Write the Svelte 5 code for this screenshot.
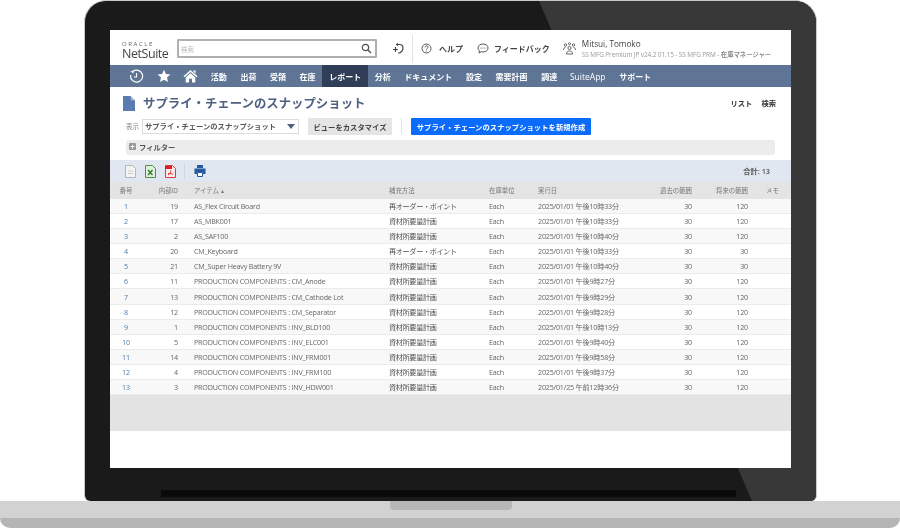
<script>
  const navA = ['活動','出荷','受領','在庫'];
  const navB = ['分析','ドキュメント','設定','需要計画','調達','SuiteApp','サポート'];
  const PC = 'PRODUCTION COMPONENTS : ';
  const RE = '再オーダー・ポイント';
  const MR = '資材所要量計画';
  const rows = [
    [19,'AS_Flex Circuit Board',RE,'2025/01/01 午後10時33分',120],
    [17,'AS_MBK001',MR,'2025/01/01 午後10時33分',120],
    [2,'AS_SAF100',MR,'2025/01/01 午後10時40分',120],
    [20,'CM_Keyboard',RE,'2025/01/01 午後10時33分',30],
    [21,'CM_Super Heavy Battery 9V',MR,'2025/01/01 午後10時40分',30],
    [11,PC+'CM_Anode',MR,'2025/01/01 午後9時27分',120],
    [13,PC+'CM_Cathode Lot',MR,'2025/01/01 午後9時29分',120],
    [12,PC+'CM_Separator',MR,'2025/01/01 午後9時28分',120],
    [1,PC+'INV_BLD100',MR,'2025/01/01 午後10時13分',120],
    [5,PC+'INV_ELC001',MR,'2025/01/01 午後9時40分',120],
    [14,PC+'INV_FRM001',MR,'2025/01/01 午後9時58分',120],
    [4,PC+'INV_FRM100',MR,'2025/01/01 午後9時37分',120],
    [3,PC+'INV_HDW001',MR,'2025/01/25 午前12時36分',120]
  ];
  const title = 'サプライ・チェーンのスナップショット';
</script>

<div class="page">
  <div class="lid">
    <div class="screen">
      <header class="top">
        <div class="logo"><span class="oracle">ORACLE</span><span class="ns">NetSuite</span></div>
        <div class="search">
          <span>検索</span>
          <svg width="11" height="11" viewBox="0 0 11 11"><circle cx="4.500" cy="4.500" r="3.200" fill="none" stroke="#555" stroke-width="1.200"/><path d="M7 7l3 3" stroke="#555" stroke-width="1.500"/></svg>
        </div>
        <svg class="back" width="12" height="13" viewBox="0 0 12 13"><path d="M4 2.500h3.500c2 0 3.500 1.500 3.500 3.500S9.500 10 7.500 11H6" fill="none" stroke="#444" stroke-width="1.200"/><path d="M1 7.500h5M3.500 5v5" stroke="#444" stroke-width="1.200"/><path d="M6 .8v3.400L3.800 2.500z" fill="#444"/></svg>
        <i class="vline"></i>
        <div class="tool help">
          <svg width="11" height="11" viewBox="0 0 11 11"><circle cx="5.500" cy="5.500" r="4.500" fill="none" stroke="#555"/><path d="M4 4.300c0-2 3-2 3 0 0 1-1.500 1-1.500 2.200" fill="none" stroke="#555"/><circle cx="5.500" cy="8" r=".6" fill="#555"/></svg>
          <b>ヘルプ</b>
        </div>
        <div class="tool feedback">
          <svg width="12" height="11" viewBox="0 0 12 11"><path d="M6 1c3 0 5 1.700 5 4s-2 4-5 4c-.7 0-1.300-.1-1.900-.3L2 10l.4-2.300C1.500 7 1 6 1 5c0-2.300 2-4 5-4z" fill="none" stroke="#555"/><circle cx="4" cy="5" r=".6" fill="#555"/><circle cx="6" cy="5" r=".6" fill="#555"/><circle cx="8" cy="5" r=".6" fill="#555"/></svg>
          <b>フィードバック</b>
        </div>
        <svg class="people" width="13" height="13" viewBox="0 0 13 13"><g fill="none" stroke="#666" stroke-width="1"><circle cx="6.500" cy="6" r="1.600"/><path d="M3.500 12c0-2 1-3 3-3s3 1 3 3z"/><circle cx="2.500" cy="3" r="1.200"/><circle cx="10.500" cy="3" r="1.200"/><circle cx="6.500" cy="1.700" r="1"/><path d="M.5 8c0-1.500.6-2.500 2-2.500M12.500 8c0-1.500-.6-2.500-2-2.500"/></g></svg>
        <div class="user">
          <span class="name">Mitsui, Tomoko</span>
          <span class="role">SS MFG Premium JP v24.2 01.15 - SS MFG PRM - <em>在庫マネージャー</em></span>
        </div>
      </header>

      <nav class="nav">
        <svg class="ni-clock" width="15" height="15" viewBox="0 0 15 15"><path d="M4 2.300A6 6 0 1 1 1.700 6" fill="none" stroke="#fff" stroke-width="1.200"/><path d="M7.500 4v4H5" fill="none" stroke="#fff" stroke-width="1.100"/><path d="M1.500 2.500l3-1v3z" fill="#fff"/></svg>
        <svg class="ni-star" width="14" height="14" viewBox="0 0 14 14"><path d="M7 .8l1.900 4.200 4.500.5-3.400 3 1 4.500L7 10.700 3 13l1-4.500-3.400-3 4.500-.5z" fill="#fff"/></svg>
        <svg class="ni-home" width="15" height="14" viewBox="0 0 15 14"><path d="M7.500 1L.5 7.300l1 1L7.500 3l6 5.300 1-1zM10.500 1.500h2v3l-2-1.800z" fill="#fff"/><path d="M2.700 8.500L7.500 4.200l4.800 4.300V13.500H9V9.800H6v3.700H2.700z" fill="#fff"/></svg>
        {#each navA as n}<a>{n}</a>{/each}
        <a class="on">レポート</a>
        {#each navB as n}<a class:latin={n === 'SuiteApp'}>{n}</a>{/each}
      </nav>

      <div class="titlebar">
        <svg width="12" height="15" viewBox="0 0 12 15"><path d="M0 0h7.500L12 4.500V15H0z" fill="#5b7cb0"/><path d="M7.800 0L12 4.200H7.800z" fill="#a9bbd6"/></svg>
        <h1>{title}</h1>
        <div class="links"><b>リスト</b><b>検索</b></div>
      </div>

      <div class="controls">
        <span class="lbl">表示</span>
        <div class="select"><span>{title}</span><i class="caret"></i></div>
        <button class="grey">ビューをカスタマイズ</button>
        <i class="vline2"></i>
        <button class="blue">{title}を新規作成</button>
      </div>

      <div class="filter"><i class="plus">+</i><span>フィルター</span></div>

      <div class="toolbar">
        <svg class="t1" width="11" height="13" viewBox="0 0 11 13"><path d="M.5.500h7l3 3v9H.500z" fill="#f4f4f4" stroke="#b5b5b5"/><path d="M3 6h5M3 8.500h5" stroke="#ccc"/></svg>
        <svg class="t2" width="11" height="13" viewBox="0 0 11 13"><path d="M.5.500h7l3 3v9H.500z" fill="#dfeedd" stroke="#4b9142"/><path d="M3 5l4.500 5M7.500 5L3 10" stroke="#2d7a26" stroke-width="1.300"/></svg>
        <svg class="t3" width="11" height="13" viewBox="0 0 11 13"><path d="M.5.500h7l3 3v9H.500z" fill="#fbe9e9" stroke="#d83a3a"/><path d="M0 1h7v3H0z" fill="#d92020"/><path d="M3 10c2-1 3-3 2.500-4.500M3 8.500c2 0 4 0 5 .8" fill="none" stroke="#d83a3a"/></svg>
        <i class="vline3"></i>
        <svg class="t4" width="12" height="12" viewBox="0 0 12 12"><path d="M3 0h6v3H3z" fill="#245a9e"/><path d="M.5 3.500h11V9H9V7H3v2H.5z" fill="#245a9e"/><path d="M3.500 7.500h5v4h-5z" fill="#fff" stroke="#245a9e"/></svg>
        <span class="total">合計: 13</span>
      </div>

      <table>
        <colgroup><col class="c1"/><col class="c2"/><col class="c3"/><col class="c4"/><col class="c5"/><col class="c6"/><col class="c7"/><col class="c8"/><col class="c9"/></colgroup>
        <thead>
          <tr><th class="ctr">番号</th><th class="r">内部ID</th><th class="item">アイテム ▴</th><th>補充方法</th><th>在庫単位</th><th>実行日</th><th class="r">過去の範囲</th><th class="r">将来の範囲</th><th class="memo">メモ</th></tr>
        </thead>
        <tbody>
          {#each rows as row, i}
            <tr class:odd={i % 2 === 0}>
              <td class="ctr link">{i + 1}</td>
              <td class="r">{row[0]}</td>
              <td class="item">{row[1]}</td>
              <td class="jp">{row[2]}</td>
              <td>Each</td>
              <td>{row[3]}</td>
              <td class="r">30</td>
              <td class="r">{row[4]}</td>
              <td></td>
            </tr>
          {/each}
        </tbody>
      </table>
      <div class="empty"></div>
    </div>
    <div class="strip"></div>
  </div>
  <div class="base">
    <div class="deck"><div class="notch"></div></div>
    <div class="lip"></div>
  </div>
</div>

<style>
  :global(body) { margin: 0; background: #fff; }
  .page { width: 900px; height: 529px; overflow: hidden; display: flex; flex-direction: column; font-family: "Open Sans", "Noto Sans CJK JP", sans-serif; color: #555; }
  .lid { position: relative; box-sizing: border-box; width: 733px; height: 501px; margin-left: 84px; padding: 29px 25px 0; background: #1a1a1a; border: 1px solid #c9c9c9; border-bottom: 0; border-radius: 22px 22px 6px 6px; overflow: hidden; flex: none; }
  .lid::before { content: ""; position: absolute; inset: 0; background: #383838; clip-path: polygon(454px 0, 100% 0, 100% 100%, 667px 100%); }
  .screen { position: relative; box-sizing: border-box; width: 681px; height: 438px; background: #fff; filter: blur(0.5px); overflow: hidden; }
  .strip { position: relative; height: 7px; margin: 22px 55px 0 51px; background: #0a0a0a; }

  .top { height: 35px; padding-top: 2px; display: flex; align-items: center; box-sizing: border-box; }
  .logo { width: 67px; padding-left: 12px; box-sizing: border-box; display: flex; flex-direction: column; line-height: 1; margin-top: 4px; }
  .oracle { font-size: 6px; font-weight: 400; letter-spacing: 1.600px; color: #666; height: 6.500px; line-height: 6px; }
  .ns { font-size: 12.500px; line-height: 13px; color: #444; letter-spacing: -.45px; }
  .search { width: 200px; height: 19px; box-sizing: border-box; border: 2px solid #b0b0b0; border-radius: 1px; display: flex; align-items: center; justify-content: space-between; padding: 0 3px 0 2px; font-size: 6.500px; color: #bbb; }
  .back { margin-left: 15px; }
  .vline { width: 1px; height: 28px; background: #e2e2e2; margin-left: 8px; }
  .tool { display: flex; align-items: center; gap: 7px; }
  .tool b { font-size: 8px; color: #444; font-weight: 700; }
  .help { margin-left: 8px; }
  .feedback { margin-left: 14px; gap: 5px; }
  .people { margin-left: 13px; }
  .user { margin-left: 6px; display: flex; flex-direction: column; white-space: nowrap; line-height: 1; gap: 4px; margin-top: 2px; }
  .name { font-size: 8.200px; color: #444; }
  .role { font-size: 6.450px; color: #999; letter-spacing: -.1px; }
  .role em { font-style: normal; color: #555; }

  .nav { height: 22px; background: #5f7596; display: flex; align-items: stretch; }
  .nav svg { align-self: center; flex: none; }
  .ni-clock { margin-left: 19px; }
  .ni-star { margin-left: 13px; }
  .ni-home { margin-left: 12px; margin-right: 6px; }
  .nav a { display: flex; align-items: center; padding: 0 6.800px; font-size: 8px; font-weight: 700; color: #fff; white-space: nowrap; }
  .nav a.on { background: #2f3e56; }
  .nav a.latin { font-weight: 400; font-size: 8.500px; padding: 0 7px 0 6px; }

  .titlebar { display: flex; align-items: center; height: 30px; padding: 2px 15px 0 13px; box-sizing: border-box; }
  h1 { margin: 2px 0 0 8px; font-size: 12.400px; font-weight: 700; color: #4f6183; white-space: nowrap; line-height: 1; }
  .links { margin-left: auto; display: flex; gap: 9px; font-size: 7.300px; color: #333; }
  .links b { font-weight: 700; }

  .controls { display: flex; align-items: center; height: 18px; padding-left: 16px; }
  .lbl { font-size: 6.500px; color: #888; width: 16px; }
  .select { width: 157px; height: 15px; box-sizing: border-box; border: 1px solid #ddd; display: flex; align-items: center; justify-content: space-between; padding: 0 3px 0 2px; font-size: 7.300px; font-weight: 700; color: #555; white-space: nowrap; }
  .caret { width: 0; height: 0; border: 4px solid transparent; border-top: 5px solid #4f6183; border-bottom: 0; }
  button { font: inherit; font-size: 7.350px; font-weight: 700; border: 0; padding: 0; height: 17px; white-space: nowrap; border-radius: 1px; }
  .grey { width: 84px; margin-left: 9px; background: #e5e5e5; color: #444; }
  .vline2 { width: 1px; height: 16px; background: #e2e2e2; margin-left: 9px; }
  .blue { width: 180px; margin-left: 9px; background: #0b6cfb; color: #fff; }

  .filter { margin: 5px 16px 0; height: 15px; box-sizing: border-box; padding: 0 0 2px 3px; background: #ececec; border-radius: 3px; display: flex; align-items: center; gap: 3px; font-size: 7.300px; font-weight: 600; color: #555; }
  .plus { width: 7px; height: 7px; background: #999; border-radius: 1px; color: #fff; font-style: normal; font-size: 8px; line-height: 7px; text-align: center; font-weight: 700; }

  .toolbar { margin-top: 5px; height: 22px; background: #e1e7f0; display: flex; align-items: center; }
  .t1 { margin-left: 15px; }
  .t2 { margin-left: 9px; }
  .t3 { margin-left: 9px; }
  .vline3 { width: 1px; height: 15px; background: #cfd6e0; margin-left: 8px; }
  .t4 { margin-left: 9px; }
  .total { margin-left: auto; margin-right: 21px; font-size: 7.300px; font-weight: 600; color: #555; }

  table { width: 681px; table-layout: fixed; border-collapse: separate; border-spacing: 0; }
  .c1 { width: 32px; } .c2 { width: 36px; } .c3 { width: 211px; } .c4 { width: 100px; } .c5 { width: 49px; } .c6 { width: 112px; } .c7 { width: 42px; } .c8 { width: 56px; } .c9 { width: 43px; }
  th, td { padding: 0; text-align: left; white-space: nowrap; overflow: visible; }
  th { height: 16px; padding-bottom: 1px; background: #e4e4e4; font-size: 6.400px; font-weight: 400; color: #777; }
  td { height: 14.080px; line-height: 14px; font-size: 7.150px; letter-spacing: -.2px; color: #666; border-bottom: 1px solid #ebebeb; background: #fff; }
  tr.odd td { background: #f8f8f8; }
  td.jp { letter-spacing: -.35px; color: #505050; }
  th.ctr, td.ctr { text-align: center; }
  th.r, td.r { text-align: right; }
  th.item, td.item { padding-left: 16px; }
  th.memo { padding-left: 18px; }
  td.link { color: #4d7aa8; }
  .empty { height: 36px; background: #e3e3e3; }

  .base { flex: none; }
  .deck { height: 17px; background: #d2d2d2; display: flex; }
  .notch { width: 122px; height: 9px; margin-left: 390px; background: #b7b7b7; border-radius: 0 0 4px 4px; }
  .lip { height: 10px; background: #b5b5b5; border-radius: 0 0 22px 22px; }
</style>
